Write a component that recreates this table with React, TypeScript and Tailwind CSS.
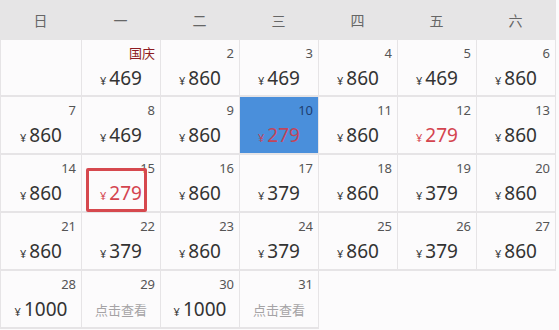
import React from "react";

type Cell =
  | { kind: "empty"; border: boolean }
  | { kind: "day"; label: string; holiday?: boolean; price?: string; red?: boolean; view?: boolean; selected?: boolean };

const d = (label: string, price: string, extra: Partial<{ red: boolean; selected: boolean; holiday: boolean }> = {}): Cell => ({
  kind: "day",
  label,
  price,
  ...extra,
});

const rows: Cell[][] = [
  [
    { kind: "empty", border: true },
    d("国庆", "469", { holiday: true }),
    d("2", "860"),
    d("3", "469"),
    d("4", "860"),
    d("5", "469"),
    d("6", "860"),
  ],
  [d("7", "860"), d("8", "469"), d("9", "860"), d("10", "279", { red: true, selected: true }), d("11", "860"), d("12", "279", { red: true }), d("13", "860")],
  [d("14", "860"), d("15", "279", { red: true }), d("16", "860"), d("17", "379"), d("18", "860"), d("19", "379"), d("20", "860")],
  [d("21", "860"), d("22", "379"), d("23", "860"), d("24", "379"), d("25", "860"), d("26", "379"), d("27", "860")],
  [
    d("28", "1000"),
    { kind: "day", label: "29", view: true },
    d("30", "1000"),
    { kind: "day", label: "31", view: true },
    { kind: "empty", border: false },
    { kind: "empty", border: false },
    { kind: "empty", border: false },
  ],
];

const heads = ["日", "一", "二", "三", "四", "五", "六"];

function CellView({ c }: { c: Cell }) {
  if (c.kind === "empty") {
    return <div className={c.border ? "border-r border-b-2 border-[#e6e4e6] bg-[#fcfbfc]" : "bg-[#fcfbfc]"} />;
  }
  const bg = c.selected ? "bg-[#4a8fdb]" : "bg-[#fcfbfc]";
  const numColor = c.holiday ? "text-[#8e1b22]" : c.selected ? "text-[#1f3e70]" : "text-[#555]";
  const priceColor = c.red ? (c.selected ? "text-[#c2455a]" : "text-[#d4444f]") : "text-[#333]";
  return (
    <div className={`flex flex-col border-r border-b-2 border-[#e6e4e6] ${bg}`}>
      <div className={`pt-[5px] pr-[5px] text-right text-[13px] leading-[16px] ${numColor}`}>{c.label}</div>
      {c.view ? (
        <div className="mt-[6px] text-center text-[13px] leading-[24px] text-[#a5a3a5]">点击查看</div>
      ) : (
        <div className={`mt-[5px] flex items-baseline justify-center leading-[24px] ${priceColor}`}>
          <span className="mr-[3px] text-[11px]">¥</span>
          <span className="text-[19px]">{c.price}</span>
        </div>
      )}
    </div>
  );
}

export default function App() {
  return (
    <div
      className="relative h-[330px] w-[559px] overflow-hidden bg-[#fcfbfc]"
      style={{ fontFamily: '"Noto Sans", "Noto Sans CJK SC", sans-serif' }}
    >
      <div className="w-[556px] border-r border-[#e6e4e6]">
        <div className="grid h-[40px] grid-cols-[81px_79px_79px_79px_79px_79px_79px] bg-[#e6e5e6] text-[14px] text-[#666]">
          {heads.map((h) => (
            <div key={h} className="flex items-center justify-center">
              {h}
            </div>
          ))}
        </div>
        {rows.map((r, i) => (
          <div
            key={i}
            className={`grid grid-cols-[81px_79px_79px_79px_79px_79px_79px] border-l border-[#e6e4e6] ${i === 0 ? "h-[57px]" : "h-[58px]"}`}
          >
            {r.map((c, j) => (
              <CellView key={j} c={c} />
            ))}
          </div>
        ))}
      </div>
      <div className="absolute left-[86px] top-[168px] h-[44px] w-[61px] rounded-[2px] border-[3px] border-[#d6484e]" />
    </div>
  );
}
